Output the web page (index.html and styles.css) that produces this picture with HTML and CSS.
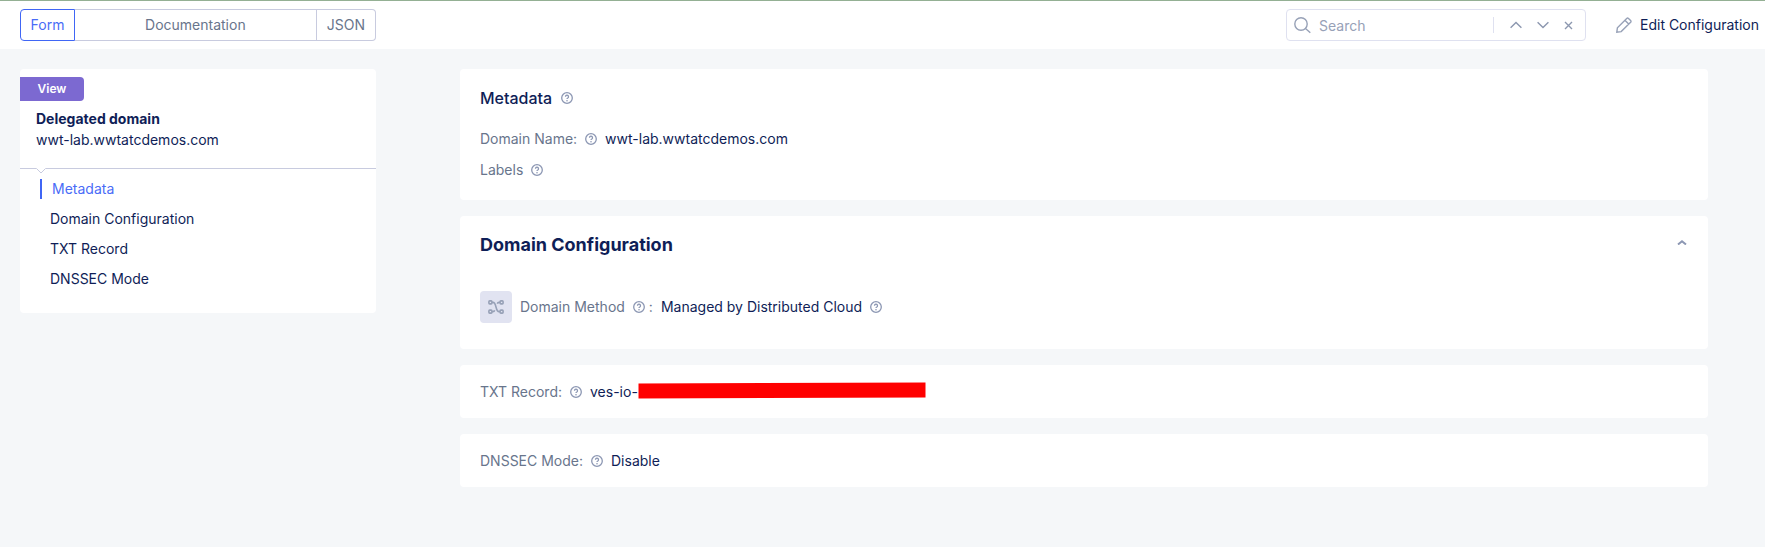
FILE: index.html
```html
<!DOCTYPE html>
<html lang="en">
<head>
<meta charset="utf-8">
<meta name="viewport" content="width=device-width, initial-scale=1">
<title>Delegated domain</title>
<link rel="stylesheet" href="styles.css">
</head>
<body>
<svg class="sprite" aria-hidden="true">
  <symbol id="help" viewBox="0 0 12 12">
    <circle cx="6" cy="6" r="5.3" fill="none" stroke="currentColor" stroke-width="1.3"/>
    <path d="M4.500 4.700a1.500 1.500 0 1 1 2.300 1.300c-.5.3-.8.5-.8 1" fill="none" stroke="currentColor" stroke-width="1.300"/>
    <circle cx="6" cy="8.700" r=".8" fill="currentColor"/>
  </symbol>
</svg>
<header class="topbar">
  <div class="segments">
    <button class="segment segment-active" type="button">Form</button>
    <button class="segment segment-wide" type="button">Documentation</button>
    <button class="segment" type="button">JSON</button>
  </div>
  <div class="tools">
    <div class="search">
      <svg class="search-icon" viewBox="0 0 17 17" aria-hidden="true"><circle cx="7" cy="7" r="6.2"/><path d="M11.500 11.500l4.800 4.300"/></svg>
      <input class="search-input" type="text" placeholder="Search" aria-label="Search">
      <div class="search-actions">
        <button class="icon-button" type="button" aria-label="Previous match"><svg width="12" height="8" viewBox="0 0 12 8"><path d="M.6 6.800L6 1.400l5.400 5.400"/></svg></button>
        <button class="icon-button" type="button" aria-label="Next match"><svg width="12" height="8" viewBox="0 0 12 8"><path d="M.6 1.200L6 6.600l5.400-5.400"/></svg></button>
        <button class="icon-button" type="button" aria-label="Clear search"><svg width="9" height="9" viewBox="0 0 9 9"><path d="M1 1l7 7M8 1L1 8"/></svg></button>
      </div>
    </div>
    <button class="edit" type="button">
      <svg class="pencil" viewBox="0 0 16 16" aria-hidden="true"><path d="M.8 15.200l.6-4.400L10.700 1.400q.9-.8 1.800 0l2.100 2.100q.8.900 0 1.800L5.200 14.600zM8.900 3.300l3.800 3.800"/></svg>
      Edit Configuration
    </button>
  </div>
</header>
<div class="page">
  <aside class="sidebar">
    <div class="summary">
      <span class="badge">View</span>
      <strong class="kind">Delegated domain</strong>
      <span class="name">wwt-lab.wwtatcdemos.com</span>
    </div>
    <svg class="notch" viewBox="0 0 10 7" aria-hidden="true"><path class="notch-fill" d="M0 0h10L5 5z"/><path class="notch-line" d="M.5.500L5 5 9.500.500"/></svg>
    <nav class="menu">
      <a class="menu-link menu-current" href="#metadata">Metadata</a>
      <a class="menu-link" href="#configuration">Domain Configuration</a>
      <a class="menu-link" href="#txt">TXT Record</a>
      <a class="menu-link" href="#dnssec">DNSSEC Mode</a>
    </nav>
  </aside>
  <main class="content">
    <section class="card card-metadata" id="metadata">
      <h2 class="heading">Metadata <svg class="help"><use href="#help"/></svg></h2>
      <div class="row"><span class="label">Domain Name:</span><svg class="help"><use href="#help"/></svg><span>wwt-lab.wwtatcdemos.com</span></div>
      <div class="row"><span class="label">Labels</span><svg class="help"><use href="#help"/></svg></div>
    </section>
    <section class="card card-config" id="configuration">
      <div class="card-head">
        <h2 class="title">Domain Configuration</h2>
        <button class="collapse" type="button" aria-label="Collapse section"><svg width="10" height="5" viewBox="0 0 10 5"><path d="M1 4.500L5 1.300l4 3.200"/></svg></button>
      </div>
      <div class="method">
        <span class="method-icon"><svg width="16" height="14" viewBox="0 0 16 14" aria-hidden="true"><rect x=".9" y=".9" width="3" height="3" rx=".8"/><rect x="12.100" y=".9" width="3" height="3" rx=".8"/><rect x=".9" y="10.100" width="3" height="3" rx=".8"/><rect x="12.100" y="10.100" width="3" height="3" rx=".8"/><path d="M4 2.400h1c3.800 0 2.200 9.200 6 9.200h1M4 11.600h1q1.300 0 1.700-1.300M12 2.400h-1q-1.300 0-1.700 1.300"/></svg></span>
        <span class="label">Domain Method</span>
        <span class="method-help"><svg class="help"><use href="#help"/></svg><span class="label">:</span></span>
        <span class="method-value">Managed by Distributed Cloud <svg class="help"><use href="#help"/></svg></span>
      </div>
    </section>
    <section class="card" id="txt">
      <div class="row"><span class="label">TXT Record:</span><svg class="help"><use href="#help"/></svg><span class="secret">ves-io-<svg class="redaction" viewBox="0 0 288 17" role="img" aria-label="Redacted value"><path d="M.5 1.500L287.500.500v15L.5 16.500z"/></svg></span></div>
    </section>
    <section class="card" id="dnssec">
      <div class="row"><span class="label">DNSSEC Mode:</span><svg class="help"><use href="#help"/></svg><span>Disable</span></div>
    </section>
  </main>
</div>
</body>
</html>
```
FILE: styles.css
```css
* { box-sizing: border-box; }

body {
  margin: 0;
  background: #f5f7f9;
  color: #0f1e57;
  font: 14px/20px Inter, "Liberation Sans", sans-serif;
}

button {
  margin: 0;
  padding: 0;
  border: 0;
  background: none;
  color: inherit;
  font: inherit;
  cursor: pointer;
}

svg { display: block; flex: none; }

.sprite { position: absolute; width: 0; height: 0; }

.topbar {
  display: flex;
  justify-content: space-between;
  padding: 8px 6px 8px 20px;
  border-top: 1px solid #94b094;
  background: #fff;
}

.segments { display: flex; width: 356px; }

.segment {
  height: 32px;
  padding: 0 10px;
  border: 1px solid #c8cbdf;
  border-left: 0;
  color: #68758c;
}

.segment:last-child { border-radius: 0 4px 4px 0; }
.segment-wide { flex: 1; }

.segment-active {
  width: 55px;
  padding: 0;
  border: 1px solid #4066f5;
  border-radius: 4px 0 0 4px;
  color: #4a6cf7;
}

.tools { display: flex; align-items: center; gap: 30px; }

.search {
  display: flex;
  align-items: center;
  width: 300px;
  height: 32px;
  padding: 0 12px 0 7px;
  border: 1px solid #dfe1f0;
  border-radius: 4px;
}

.search-icon { width: 17px; height: 17px; fill: none; stroke: #97a1b7; stroke-width: 1.4; }

.search-input {
  flex: 1;
  min-width: 0;
  padding: 1px 0 0 8px;
  border: 0;
  outline: 0;
  background: none;
  color: inherit;
  font: inherit;
}

.search-input::placeholder { color: #97a1b7; opacity: 1; }

.search-actions {
  display: flex;
  align-items: center;
  gap: 15px;
  height: 16px;
  padding-left: 16px;
  border-left: 1px solid #dfe1f0;
}

.icon-button svg { fill: none; stroke: #8c97af; stroke-width: 1.4; }

.edit { display: flex; align-items: center; gap: 8px; }
.pencil { width: 16px; height: 16px; fill: none; stroke: #97a1b7; stroke-width: 1.4; }

.page {
  display: flex;
  align-items: flex-start;
  gap: 84px;
  padding: 20px 57px 60px 20px;
}

.sidebar { flex: none; width: 356px; border-radius: 4px; background: #fff; }

.summary {
  display: flex;
  flex-direction: column;
  align-items: flex-start;
  padding: 8px 16px 17px;
  border-bottom: 1px solid #c8cbdf;
}

.badge {
  width: 64px;
  margin: 0 0 8px -16px;
  border-radius: 0 4px 4px 0;
  background: #7c69d1;
  color: #fff;
  font-size: 12px;
  font-weight: 600;
  line-height: 24px;
  text-align: center;
}

.kind { font-weight: 700; }
.name { line-height: 22px; }

.notch { width: 10px; height: 7px; margin: -1px 0 -6px 16px; }
.notch-fill { fill: #fff; }
.notch-line { fill: none; stroke: #c8cbdf; }

.menu {
  display: flex;
  flex-direction: column;
  gap: 10px;
  padding: 10px 20px 24px;
}

.menu-link {
  padding-left: 10px;
  color: inherit;
  text-decoration: none;
}

.menu-current { border-left: 2px solid #4066f5; color: #4a6cf7; }

.content { display: grid; flex: 1; gap: 16px; min-width: 0; }

.card { padding: 17px 20px 16px; border-radius: 4px; background: #fff; }
.card-metadata { display: grid; gap: 11px; padding: 17px 20px 20px; }

.heading {
  display: flex;
  align-items: center;
  gap: 9px;
  margin: 0 0 8px;
  font-size: 16px;
  font-weight: 500;
  line-height: 24px;
}

.row { display: flex; align-items: center; gap: 8px; min-height: 20px; }
.label { color: #68758c; }
.help { width: 12px; height: 12px; color: #8c97b3; }

.card-config { padding: 16px 20px 26px; }

.card-head { display: flex; align-items: flex-start; justify-content: space-between; }
.title { margin: 0; font-size: 18px; font-weight: 700; line-height: 26px; }

.collapse { padding: 8px 1px; }
.collapse svg { fill: none; stroke: #8c97b3; stroke-width: 2; }

.method { display: flex; align-items: center; gap: 8px; margin-top: 33px; }

.method-icon {
  display: grid;
  place-items: center;
  width: 32px;
  height: 32px;
  border-radius: 4px;
  background: #e1e3f1;
}

.method-icon svg { fill: none; stroke: #97a1b7; stroke-width: 1.6; }
.method-help, .method-value { display: flex; align-items: center; gap: 8px; }
.method-help { gap: 4px; }

.secret { display: flex; align-items: flex-start; }
.redaction { width: 288px; height: 17px; fill: #f00; }
```
